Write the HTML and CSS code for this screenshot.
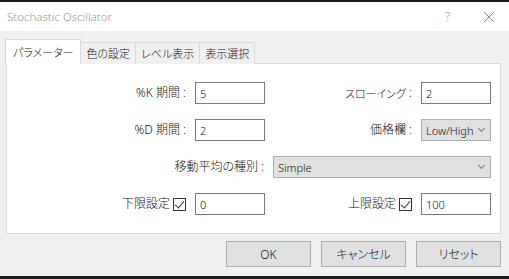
FILE: index.html
```html
<!DOCTYPE html>
<html lang="ja">

<head>
    <meta charset="UTF-8">
    <meta name="viewport" content="width=device-width, initial-scale=1.0">
    <title>Stochastic Oscillator</title>
    <link rel="stylesheet" href="styles.css">
</head>

<body>
    <div class="strip strip_top"></div>
    <div class="dialog">
        <div class="titlebar">
            <span class="title">Stochastic Oscillator</span>
            <span class="help">?</span>
            <span class="close">
                <svg width="12" height="12" viewBox="0 0 12 12">
                    <path d="M1 1L11 11M11 1L1 11" stroke="#8a8a8a" stroke-width="1" fill="none" />
                </svg>
            </span>
        </div>
        <div class="client">
            <ul class="tabs">
                <li class="tab active">パラメーター</li>
                <li class="tab">色の設定</li>
                <li class="tab">レベル表示</li>
                <li class="tab">表示選択</li>
            </ul>
            <div class="panel">
                <!-- 1行目 -->
                <div class="row">
                    <label class="lbl lbl_left">%K 期間 :</label>
                    <div class="field small">5</div>
                    <label class="lbl lbl_right"><span class="kana">スローイング</span> :</label>
                    <div class="field small">2</div>
                </div>
                <!-- 2行目 -->
                <div class="row">
                    <label class="lbl lbl_left">%D 期間 :</label>
                    <div class="field small">2</div>
                    <label class="lbl lbl_right">価格欄 :</label>
                    <div class="combo small">Low/High<span class="arrow"></span></div>
                </div>
                <!-- 移動平均 -->
                <div class="row">
                    <label class="lbl lbl_wide">移動平均の種別 :</label>
                    <div class="combo wide">Simple<span class="arrow"></span></div>
                </div>
                <!-- 上限・下限 -->
                <div class="row">
                    <label class="lbl lbl_left">下限設定<span class="check"></span></label>
                    <div class="field small">0</div>
                    <label class="lbl lbl_right">上限設定<span class="check"></span></label>
                    <div class="field small">100</div>
                </div>
            </div>
            <div class="buttons">
                <button class="btn">OK</button>
                <button class="btn">キャンセル</button>
                <button class="btn">リセット</button>
            </div>
        </div>
    </div>
    <div class="strip strip_bottom"></div>
</body>

</html>
```

FILE: styles.css
```css
* {
    box-sizing: border-box;
}

body {
    margin: 0;
    width: 509px;
    height: 279px;
    overflow: hidden;
    background: #1b1b1b;
    font: 300 12px/1 "Noto Sans", "Noto Sans CJK JP", sans-serif;
    font-feature-settings: "palt";
    color: #111;
}

.strip {
    background: #1b1b1b;
}

.strip_top {
    height: 2px;
}

.strip_bottom {
    height: 3px;
}

.dialog {
    height: 274px;
    display: flex;
    flex-direction: column;
}

/* タイトルバー */
.titlebar {
    height: 29px;
    background: #fff;
    display: flex;
    align-items: center;
    padding: 0 0 0 7px;
}

.title {
    flex: 1;
    color: #999;
    font-size: 11.5px;
}

.help {
    color: #999;
    font-size: 12px;
    width: 34px;
}

.close {
    width: 30px;
    display: flex;
    padding-left: 4px;
}

.client {
    flex: 1;
    background: #f0f0f0;
    padding: 8px 8px 0 6px;
}

/* タブ */
.tabs {
    margin: 0;
    padding: 0;
    list-style: none;
    display: flex;
    align-items: flex-end;
    height: 25px;
    margin-bottom: -1px;
    position: relative;
    font-size: 11px;
}

.tab {
    height: 22px;
    padding: 0 5px;
    display: flex;
    align-items: center;
    background: #f0f0f0;
    border: 1px solid #d9d9d9;
    border-bottom: none;
    border-left: none;
}

.tab.active {
    height: 25px;
    background: #fff;
    border-left: 1px solid #d9d9d9;
    margin-left: -1px;
    padding: 0 7px;
}

.panel {
    background: #fff;
    border: 1px solid #d9d9d9;
    height: 171px;
    padding: 18px 9px 0 0;
    display: flex;
    flex-direction: column;
    gap: 15px;
}

.row {
    display: flex;
    align-items: center;
    height: 22px;
}

.lbl {
    display: flex;
    align-items: center;
    justify-content: flex-end;
    padding-right: 9px;
    white-space: pre;
}

.kana {
    font-size: 11px;
}

.lbl_left {
    width: 188px;
}

.lbl_right {
    flex: 1;
}

.lbl_wide {
    width: 266px;
}

.field,
.combo {
    height: 22px;
    display: flex;
    align-items: center;
    padding-left: 4px;
    font-size: 11px;
}

.field {
    border: 1px solid #7a7a7a;
    background: #fff;
}

.combo {
    border: 1px solid #adadad;
    background: #e1e1e1;
    position: relative;
}

.small {
    width: 70px;
}

.wide {
    width: 218px;
}

/* プルダウンの矢印 */
.arrow {
    position: absolute;
    right: 6px;
    top: 6px;
    width: 5px;
    height: 5px;
    border-right: 1px solid #777;
    border-bottom: 1px solid #777;
    transform: rotate(45deg);
}

/* チェックボックス */
.check {
    width: 13px;
    height: 13px;
    margin-left: 3px;
    border: 1px solid #333;
    background: #fff;
    position: relative;
}

.check::after {
    content: "";
    position: absolute;
    left: 3px;
    top: 0;
    width: 4px;
    height: 8px;
    border-right: 1px solid #333;
    border-bottom: 1px solid #333;
    transform: rotate(40deg);
}

/* ボタン */
.buttons {
    display: flex;
    justify-content: flex-end;
    gap: 10px;
    padding: 7px 0 0;
}

.btn {
    width: 85px;
    height: 26px;
    background: #e1e1e1;
    border: 1px solid #adadad;
    font: 300 12px "Noto Sans", "Noto Sans CJK JP", sans-serif;
    font-feature-settings: "palt";
    color: #111;
    padding: 0;
}
```
